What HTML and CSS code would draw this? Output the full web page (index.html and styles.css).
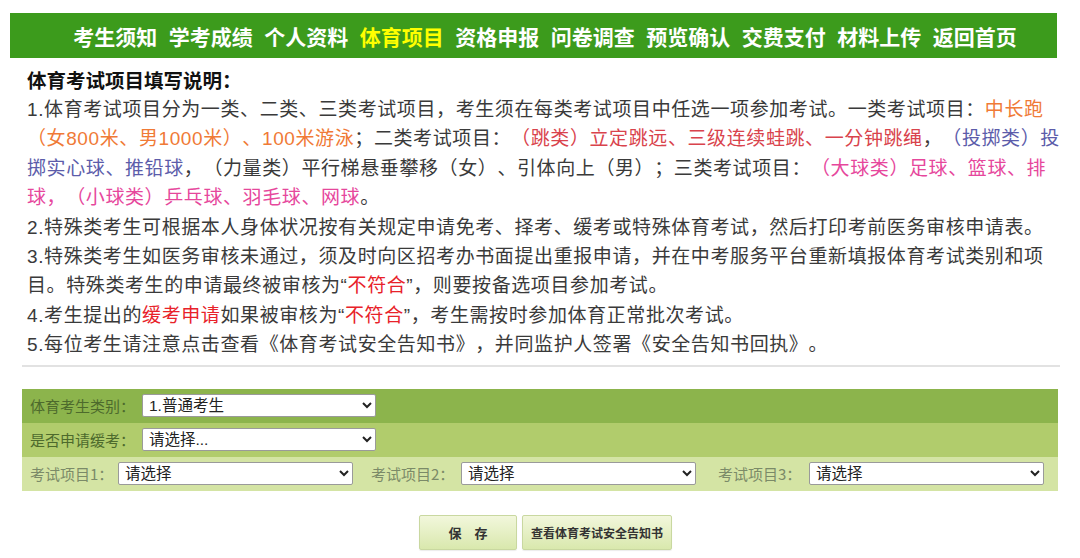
FILE: index.html
```html
<!DOCTYPE html>
<html lang="zh-CN">
<head>
<meta charset="utf-8">
<title>体育项目</title>
<link rel="stylesheet" href="styles.css">
</head>
<body>
<div class="page">
  <nav class="nav">
    <a>考生须知</a><a>学考成绩</a><a>个人资料</a><a class="active">体育项目</a><a>资格申报</a><a>问卷调查</a><a>预览确认</a><a>交费支付</a><a>材料上传</a><a>返回首页</a>
  </nav>

  <div class="intro">
    <h1 class="title">体育考试项目填写说明：</h1>
    <p class="rules">1.体育考试项目分为一类、二类、三类考试项目，考生须在每类考试项目中任选一项参加考试。一类考试项目：<span class="c-orange">中长跑</span><br><span class="c-orange">（女800米、男1000米）、100米游泳</span>；二类考试项目：<span class="c-red">（跳类）立定跳远、三级连续蛙跳、一分钟跳绳</span>，<span class="c-blue">（投掷类）投</span><br><span class="c-blue">掷实心球、推铅球</span>，（力量类）平行梯悬垂攀移（女）、引体向上（男）；三类考试项目：<span class="c-pink">（大球类）足球、篮球、排</span><br><span class="c-pink">球，（小球类）乒乓球、羽毛球、网球</span>。<br>2.特殊类考生可根据本人身体状况按有关规定申请免考、择考、缓考或特殊体育考试，然后打印考前医务审核申请表。<br>3.特殊类考生如医务审核未通过，须及时向区招考办书面提出重报申请，并在中考服务平台重新填报体育考试类别和项<br>目。特殊类考生的申请最终被审核为“<span class="c-strong">不符合</span>”，则要按备选项目参加考试。<br>4.考生提出的<span class="c-strong">缓考申请</span>如果被审核为“<span class="c-strong">不符合</span>”，考生需按时参加体育正常批次考试。<br>5.每位考生请注意点击查看《体育考试安全告知书》，并同监护人签署《安全告知书回执》。</p>
  </div>

  <hr class="sep">

  <div class="form">
    <div class="row row-1">
      <label class="lbl lbl-wide">体育考生类别：</label>
      <select class="sel sel-a"><option>1.普通考生</option></select>
    </div>
    <div class="row row-2">
      <label class="lbl lbl-wide">是否申请缓考：</label>
      <select class="sel sel-a"><option>请选择...</option></select>
    </div>
    <div class="row row-3">
      <label class="lbl lbl-1">考试项目1：</label>
      <select class="sel sel-b"><option>请选择</option></select>
      <label class="lbl lbl-2">考试项目2：</label>
      <select class="sel sel-b"><option>请选择</option></select>
      <label class="lbl lbl-3">考试项目3：</label>
      <select class="sel sel-b"><option>请选择</option></select>
    </div>
  </div>

  <div class="actions">
    <button class="btn btn-save">保　存</button>
    <button class="btn btn-view">查看体育考试安全告知书</button>
  </div>
</div>
</body>
</html>
```

FILE: styles.css
```css
* { box-sizing: border-box; }

html, body {
  margin: 0;
  padding: 0;
  background: #ffffff;
}

body {
  font-family: "Liberation Sans", "Noto Sans CJK SC", sans-serif;
  color: #3a3a3a;
  text-spacing-trim: space-all;
}

.page {
  width: 1080px;
  height: 558px;
  overflow: hidden;
  padding-top: 13px;
}

/* navigation bar */
.nav {
  margin-left: 10px;
  width: 1047px;
  height: 45px;
  background: #3c9b1c;
  display: flex;
  justify-content: center;
  align-items: center;
  gap: 11.5px;
  padding-left: 23px;
}

.nav a {
  color: #ffffff;
  font-size: 21px;
  font-weight: bold;
  line-height: 1;
  font-family: "Noto Sans CJK SC", sans-serif;
  white-space: nowrap;
  padding-top: 2px;
}

.nav a.active {
  color: #ffff00;
}

/* instructions */
.intro {
  padding-left: 27px;
  margin-top: 8px;
}

.title {
  margin: 0;
  font-size: 19.5px;
  line-height: 28px;
  font-weight: bold;
  color: #111111;
  font-family: "Noto Sans CJK SC", sans-serif;
}

.rules {
  margin: 1px 0 0;
  font-size: 19px;
  line-height: 29.4px;
  letter-spacing: 0.6px;
  white-space: nowrap;
  color: #3a3a3a;
}

.c-orange { color: #f07a36; }
.c-red { color: #d9434c; }
.c-blue { color: #5c5caa; }
.c-pink { color: #e6479c; }
.c-strong { color: #e8222a; }

.sep {
  margin: 5px 20px 0 22px;
  border: 0;
  border-top: 2px solid #e2e2e2;
  height: 0;
}

/* form table */
.form {
  margin: 22px 0 0 22px;
  width: 1036px;
}

.row {
  display: flex;
  align-items: center;
  height: 34px;
  padding-left: 8px;
}

.row-1 { background: #8cb44c; height: 34px; }
.row-2 { background: #b1cc6c; }
.row-3 { background: #d4e4a4; }

.lbl {
  font-size: 15px;
  font-family: "Noto Sans CJK SC", sans-serif;
  white-space: nowrap;
}

.row-1 .lbl, .row-2 .lbl { color: #4d6a2c; }
.row-3 .lbl { color: #7b8a68; }

.lbl-wide { width: 112px; }
.lbl-1 { width: 88px; }
.lbl-2 { width: 90px; margin-left: 18px; }
.lbl-3 { width: 91px; margin-left: 22px; }

.sel {
  height: 23px;
  font-size: 15.5px;
  font-family: "Liberation Sans", "Noto Sans CJK SC", sans-serif;
  color: #222222;
  background: #ffffff;
  border: 1px solid #9a9a9a;
  border-radius: 2px;
  padding: 0 2px;
}

.sel-a { width: 234px; }
.sel-b { width: 235px; }

/* buttons */
.actions {
  display: flex;
  justify-content: center;
  gap: 5px;
  margin-top: 24px;
  padding-left: 11px;
}

.btn {
  height: 35px;
  padding: 0;
  border: 1px solid #c9d8a0;
  border-radius: 2px;
  background: linear-gradient(#f2f7dc, #d9e8ad);
  color: #333333;
  font-size: 13px;
  font-weight: bold;
  font-family: "Noto Sans CJK SC", sans-serif;
  box-shadow: 0 1px 1px rgba(0,0,0,0.08);
}

.btn-save { width: 98px; }
.btn-view { width: 150px; font-size: 12px; }
```
